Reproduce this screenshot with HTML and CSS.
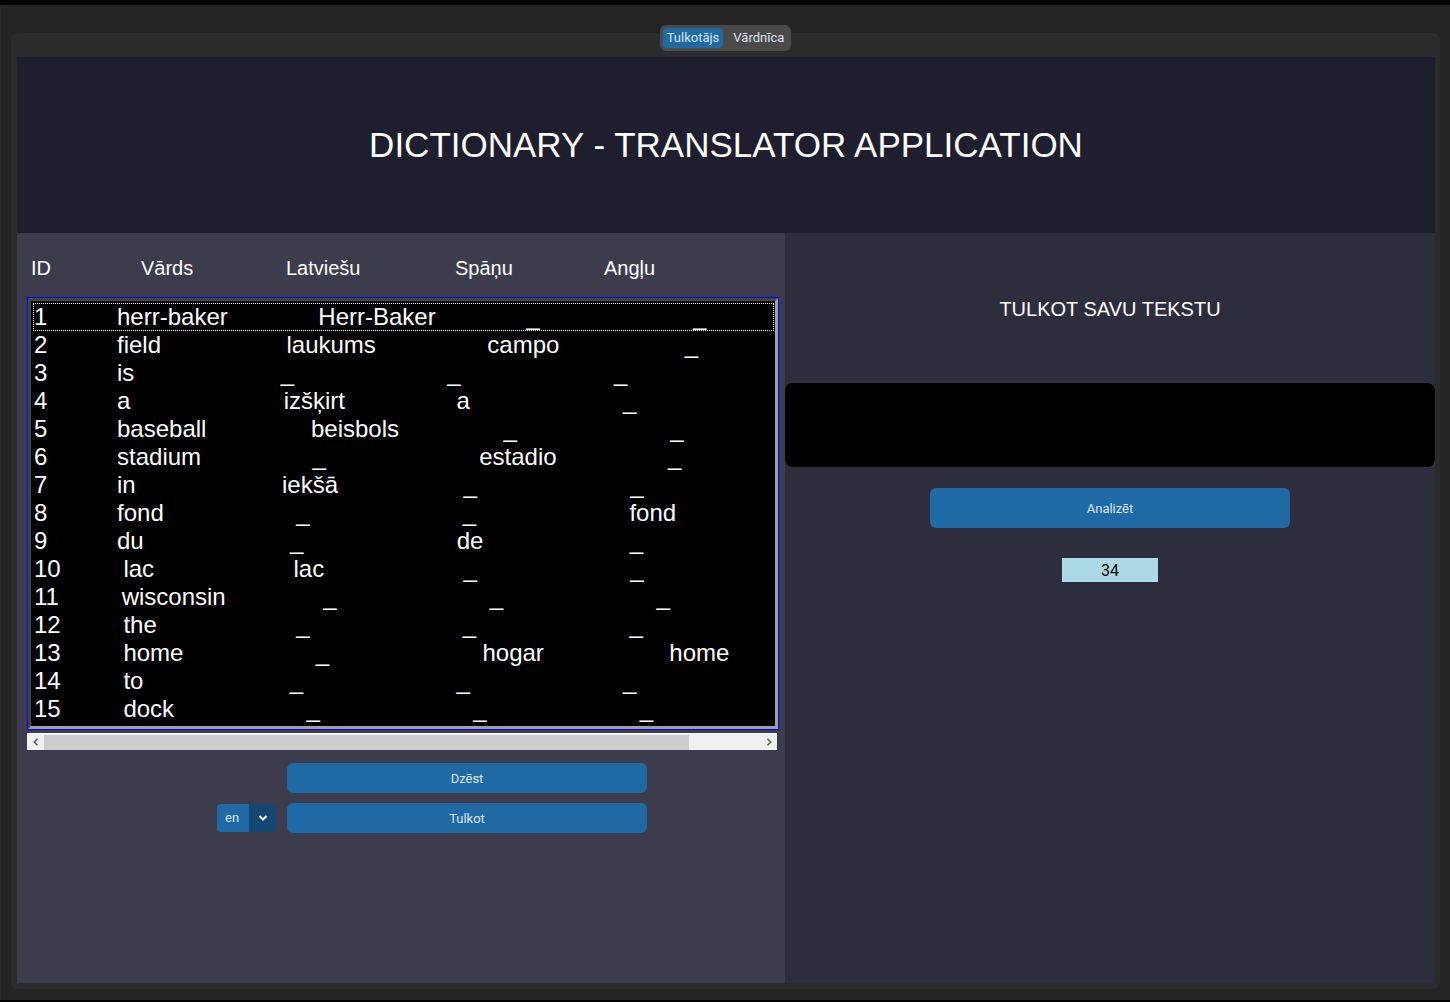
FILE: index.html
```html
<!DOCTYPE html>
<html lang="lv">
<head>
<meta charset="utf-8">
<title>Dictionary - Translator Application</title>
<link rel="stylesheet" href="styles.css">
</head>
<body>
<div class="window">
  <div class="tabs">
    <div class="seg">
      <div class="seg-btn active">Tulkotājs</div>
      <div class="seg-btn">Vārdnīca</div>
    </div>
  </div>
  <div class="frame">
    <div class="header">DICTIONARY - TRANSLATOR APPLICATION</div>
    <div class="body">
      <div class="left">
        <div class="cols">
          <div>ID</div>
          <div>Vārds</div>
          <div>Latviešu</div>
          <div>Spāņu</div>
          <div>Angļu</div>
        </div>
        <div class="list">
          <div class="list-inner">
            <div class="row focus">1          herr-baker             Herr-Baker             _                      _</div>
            <div class="row">2          field                  laukums                campo                  _</div>
            <div class="row">3          is                     _                      _                      _</div>
            <div class="row">4          a                      izšķirt                a                      _</div>
            <div class="row">5          baseball               beisbols               _                      _</div>
            <div class="row">6          stadium                _                      estadio                _</div>
            <div class="row">7          in                     iekšā                  _                      _</div>
            <div class="row">8          fond                   _                      _                      fond</div>
            <div class="row">9          du                     _                      de                     _</div>
            <div class="row">10         lac                    lac                    _                      _</div>
            <div class="row">11         wisconsin              _                      _                      _</div>
            <div class="row">12         the                    _                      _                      _</div>
            <div class="row">13         home                   _                      hogar                  home</div>
            <div class="row">14         to                     _                      _                      _</div>
            <div class="row">15         dock                   _                      _                      _</div>
          </div>
        </div>
        <div class="hscroll">
          <div class="arrow"><svg width="8" height="8" viewBox="0 0 8 8"><path d="M5.5 0.8 L2.3 4 L5.5 7.2" fill="none" stroke="#606060" stroke-width="1.6"/></svg></div>
          <div class="thumb"></div>
          <div class="spacer"></div>
          <div class="arrow"><svg width="8" height="8" viewBox="0 0 8 8"><path d="M2.5 0.8 L5.7 4 L2.5 7.2" fill="none" stroke="#606060" stroke-width="1.6"/></svg></div>
        </div>
        <div class="controls">
          <div class="btn btn-delete">Dzēst</div>
          <div class="combo">
            <div class="combo-text">en</div>
            <div class="combo-arrow"><svg width="10" height="6" viewBox="0 0 10 6"><path d="M1.5 1 L5 4.5 L8.5 1" fill="none" stroke="#ffffff" stroke-width="2"/></svg></div>
          </div>
          <div class="btn">Tulkot</div>
        </div>
      </div>
      <div class="right">
        <div class="r-title">TULKOT SAVU TEKSTU</div>
        <div class="textbox"></div>
        <div class="btn btn-analyze">Analizēt</div>
        <div class="count">34</div>
      </div>
    </div>
  </div>
</div>
</body>
</html>
```
FILE: styles.css
```css
* { box-sizing: border-box; }
html, body { margin: 0; padding: 0; }
body {
  background: #000;
  width: 1450px;
  height: 1002px;
  overflow: hidden;
  font-family: Roboto, "Liberation Sans", sans-serif;
}
.window {
  margin-top: 5px;
  height: 995px;
  background: #242424;
  padding-top: 20px;
  border-left: 1px solid #2a2a2a;
}
.tabs {
  position: relative;
  z-index: 1;
  display: flex;
  justify-content: center;
  height: 26px;
}
.seg {
  display: flex;
  background: #4a4a4a;
  border-radius: 6px;
  padding: 3px;
}
.seg-btn {
  height: 20px;
  line-height: 20px;
  padding: 0 4px;
  font-size: 13px;
  color: #dce4ee;
  border-radius: 4px;
}
.seg-btn + .seg-btn { margin-left: 6px; }
.seg-btn.active { background: #1f6aa5; }
.frame {
  margin: -18px 10px 0 10px;
  height: 956px;
  background: #2b2b2b;
  border-radius: 6px;
  padding: 24px 5px 6px 6px;
}
.header {
  height: 176px;
  background: #1f1e2e;
  display: flex;
  align-items: center;
  justify-content: center;
  color: #fff;
  font-family: "Liberation Sans", Arial, sans-serif;
  font-size: 35px;
}
.body {
  display: flex;
  height: 750px;
}
.left {
  width: 768px;
  background: #3d3c4d;
  padding: 23px 0 0 10px;
}
.cols {
  display: grid;
  grid-template-columns: 110px 145px 169px 149px auto;
  padding-left: 4px;
  font-family: "Liberation Sans", Arial, sans-serif;
  font-size: 20px;
  line-height: 24px;
  color: #fff;
}
.list {
  margin-top: 17px;
  width: 752px;
  border: 1px solid #0000ff;
}
.list-inner {
  border: 3px solid;
  border-color: #454545 #a0a0a0 #a0a0a0 #454545;
  background: #000;
  padding: 2px 1px 3px 2px;
}
.row {
  height: 28px;
  padding-left: 1px;
  font-family: "Liberation Sans", Arial, sans-serif;
  font-size: 24px;
  line-height: 28px;
  word-spacing: 0.3px;
  color: #fff;
  white-space: pre;
  overflow: hidden;
}
.row.focus {
  outline: 1px dotted #fff;
  outline-offset: -1px;
}
.hscroll {
  margin-top: 3px;
  width: 750px;
  height: 17px;
  background: #f0f0f0;
  border-top: 1px solid #fff;
  display: flex;
  align-items: center;
}
.arrow {
  width: 17px;
  height: 15px;
  display: flex;
  align-items: center;
  justify-content: center;
}
.thumb {
  width: 645px;
  height: 15px;
  background: #cdcdcd;
}
.spacer { flex: 1; }
.controls {
  margin: 13px 0 0 190px;
  display: grid;
  grid-template-columns: 60px 360px;
  column-gap: 10px;
  row-gap: 10px;
}
.btn {
  height: 30px;
  background: #1f6aa5;
  border-radius: 6px;
  color: #dce4ee;
  font-size: 13px;
  display: flex;
  align-items: center;
  justify-content: center;
}
.btn-delete { grid-column: 2; }
.combo {
  align-self: center;
  height: 28px;
  display: flex;
}
.combo-text {
  width: 32px;
  background: #1f6aa5;
  border-radius: 4px 0 0 4px;
  color: #dce4ee;
  font-size: 13px;
  line-height: 28px;
  padding-left: 8px;
}
.combo-arrow {
  width: 28px;
  background: #144870;
  border-radius: 0 4px 4px 0;
  display: flex;
  align-items: center;
  justify-content: center;
}
.right {
  flex: 1;
  background: #2e2d3d;
  display: flex;
  flex-direction: column;
  align-items: center;
}
.r-title {
  margin-top: 64px;
  font-family: "Liberation Sans", Arial, sans-serif;
  font-size: 20px;
  line-height: 24px;
  color: #fff;
}
.textbox {
  margin-top: 62px;
  width: 100%;
  height: 84px;
  background: #000;
  border-radius: 8px;
}
.btn-analyze {
  margin-top: 21px;
  width: 360px;
  height: 40px;
}
.count {
  margin-top: 30px;
  width: 96px;
  height: 24px;
  background: #add8e6;
  color: #000;
  font-size: 16px;
  display: flex;
  align-items: center;
  justify-content: center;
}
```
